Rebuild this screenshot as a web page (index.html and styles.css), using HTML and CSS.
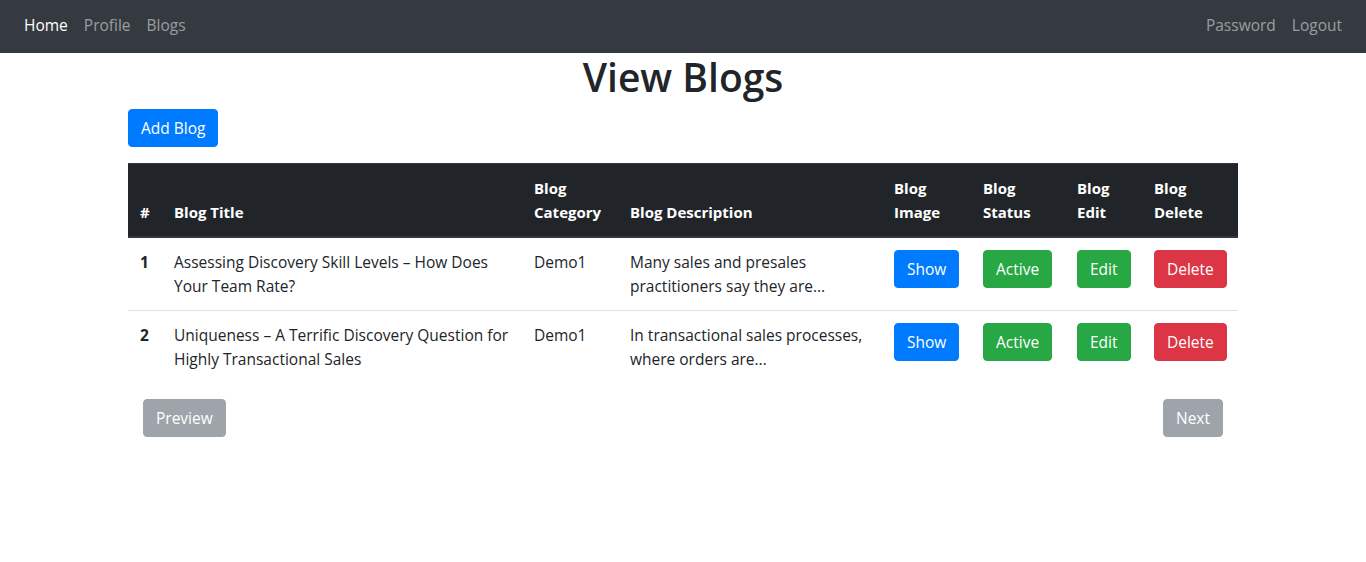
FILE: index.html
```html
<!DOCTYPE html>
<html lang="en">
<head>
<meta charset="utf-8">
<title>View Blogs</title>
<link rel="stylesheet" href="styles.css">
</head>
<body>
<nav class="navbar">
  <ul class="nav-list">
    <li><a class="nav-link active" href="#">Home</a></li>
    <li><a class="nav-link" href="#">Profile</a></li>
    <li><a class="nav-link" href="#">Blogs</a></li>
  </ul>
  <ul class="nav-list">
    <li><a class="nav-link" href="#">Password</a></li>
    <li><a class="nav-link" href="#">Logout</a></li>
  </ul>
</nav>

<main class="container">
  <h1 class="title">View Blogs</h1>
  <div class="toolbar">
    <a class="btn btn-primary" href="#">Add Blog</a>
  </div>

  <table class="table">
    <colgroup>
      <col class="c-num">
      <col class="c-title">
      <col class="c-cat">
      <col class="c-desc">
      <col class="c-img">
      <col class="c-status">
      <col class="c-edit">
      <col class="c-del">
    </colgroup>
    <thead>
      <tr>
        <th>#</th>
        <th>Blog Title</th>
        <th>Blog Category</th>
        <th>Blog Description</th>
        <th>Blog Image</th>
        <th>Blog Status</th>
        <th>Blog Edit</th>
        <th>Blog Delete</th>
      </tr>
    </thead>
    <tbody>
      <tr>
        <th class="row-num">1</th>
        <td>Assessing Discovery Skill Levels – How Does Your Team Rate?</td>
        <td>Demo1</td>
        <td>Many sales and presales practitioners say they are...</td>
        <td><a class="btn btn-primary" href="#">Show</a></td>
        <td><a class="btn btn-success" href="#">Active</a></td>
        <td><a class="btn btn-success" href="#">Edit</a></td>
        <td><a class="btn btn-danger" href="#">Delete</a></td>
      </tr>
      <tr>
        <th class="row-num">2</th>
        <td>Uniqueness – A Terrific Discovery Question for Highly Transactional Sales</td>
        <td>Demo1</td>
        <td>In transactional sales processes, where orders are...</td>
        <td><a class="btn btn-primary" href="#">Show</a></td>
        <td><a class="btn btn-success" href="#">Active</a></td>
        <td><a class="btn btn-success" href="#">Edit</a></td>
        <td><a class="btn btn-danger" href="#">Delete</a></td>
      </tr>
    </tbody>
  </table>

  <div class="pager">
    <span class="btn btn-secondary disabled">Preview</span>
    <span class="btn btn-secondary disabled">Next</span>
  </div>
</main>
</body>
</html>
```

FILE: styles.css
```css
* {
  box-sizing: border-box;
}

body {
  margin: 0;
  font-family: "Open Sans", "Noto Sans", "Liberation Sans", sans-serif;
  font-size: 16px;
  line-height: 24px;
  color: #212529;
  background: #fff;
}

.navbar {
  display: flex;
  justify-content: space-between;
  align-items: center;
  height: 53px;
  padding: 0 16px 3px;
  background: #343a40;
}

.nav-list {
  display: flex;
  list-style: none;
  margin: 0;
  padding: 0;
}

.nav-link {
  display: block;
  padding: 8px;
  color: rgba(255, 255, 255, 0.5);
  text-decoration: none;
  font-size: 15.5px;
}

.nav-link.active {
  color: #fff;
}

.container {
  width: 1140px;
  margin: 0 auto;
  padding: 0 15px;
}

.title {
  margin: 0 0 8px;
  text-align: center;
  font-size: 39px;
  font-weight: 600;
  line-height: 48px;
}

.toolbar {
  display: flex;
}

.btn {
  display: inline-block;
  padding: 6px 12px;
  border: 1px solid transparent;
  border-radius: 4px;
  font-size: 15.5px;
  line-height: 24px;
  color: #fff;
  text-decoration: none;
  white-space: nowrap;
}

.btn-primary {
  background: #007bff;
  border-color: #007bff;
}

.btn-success {
  background: #28a745;
  border-color: #28a745;
}

.btn-danger {
  background: #dc3545;
  border-color: #dc3545;
}

.btn-secondary {
  background: #6c757d;
  border-color: #6c757d;
}

.btn.disabled {
  opacity: 0.65;
}

.table {
  width: 100%;
  margin: 16px 0 16px;
  border-collapse: collapse;
  table-layout: fixed;
  font-size: 15.5px;
}

.c-num { width: 34px; }
.c-title { width: 360px; }
.c-cat { width: 96px; }
.c-desc { width: 264px; }
.c-img { width: 89px; }
.c-status { width: 94px; }
.c-edit { width: 77px; }
.c-del { width: 96px; }

.table th,
.table td {
  padding: 12px;
  text-align: left;
  vertical-align: top;
  border-top: 1px solid #dee2e6;
}

.table thead th {
  background: #212529;
  color: #fff;
  font-weight: 700;
  vertical-align: bottom;
  border-top: 1px solid #32383e;
  border-bottom: 2px solid #32383e;
  font-size: 15px;
}

.table tbody tr:first-child th,
.table tbody tr:first-child td {
  border-top: 0;
}

.row-num {
  font-weight: 700;
}

.pager {
  display: flex;
  justify-content: space-between;
  padding: 0 15px;
}
```
